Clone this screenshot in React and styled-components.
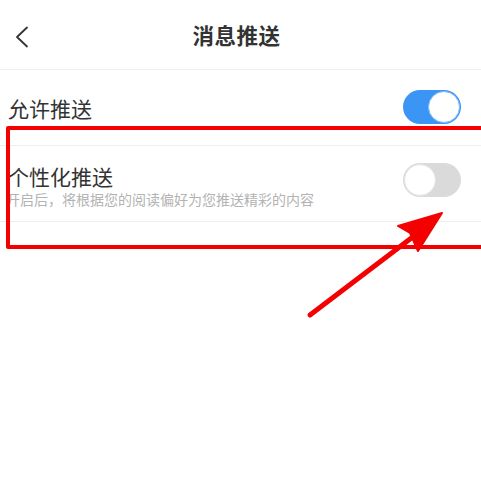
import React, { useState } from 'react'
import styled, { createGlobalStyle } from 'styled-components'

const GlobalStyle = createGlobalStyle`
  html, body {
    margin: 0;
    padding: 0;
    background: #ffffff;
  }
  body {
    font-family: "Noto Sans CJK SC", "Noto Sans", sans-serif;
    color: #333333;
  }
`

const Page = styled.div`
  position: relative;
  width: 481px;
  height: 490px;
  overflow: hidden;
  background: #fff;
`

const Header = styled.header`
  height: 69px;
  display: flex;
  align-items: center;
  justify-content: center;
  position: relative;
  border-bottom: 1px solid #eeeeee;
`

const BackButton = styled.button`
  position: absolute;
  left: 10px;
  top: 22px;
  width: 24px;
  height: 30px;
  padding: 0;
  border: none;
  background: none;
  display: flex;
  align-items: center;
  justify-content: center;
`

const Title = styled.h1`
  margin: 0 8px 1px 0;
  font-size: 21.5px;
  font-weight: 700;
  color: #333;
  letter-spacing: 0.5px;
`

const Row = styled.div`
  height: 75px;
  display: flex;
  align-items: center;
  justify-content: space-between;
  padding: 0 20px 0 8px;
  border-bottom: 1px solid #eeeeee;
`

const TextBlock = styled.div`
  display: flex;
  flex-direction: column;
  justify-content: center;
  margin-top: ${(p) => p.$shift || 0}px;
`

const Label = styled.span`
  font-size: 21px;
  line-height: 28px;
  color: #333;
`

const Hint = styled.span`
  font-size: 14px;
  line-height: 18px;
  color: #b3b3b3;
  margin-left: -2px;
  white-space: nowrap;
`

const Track = styled.button`
  position: relative;
  width: 58px;
  height: 34px;
  padding: 0;
  border: none;
  border-radius: 17px;
  background: ${(p) => (p.$on ? '#3b95f4' : '#dadada')};
  cursor: pointer;
  flex-shrink: 0;
  margin-top: ${(p) => p.$shift || 0}px;
`

const Knob = styled.span`
  position: absolute;
  top: 1px;
  left: ${(p) => (p.$on ? '25px' : '1px')};
  width: 32px;
  height: 32px;
  border-radius: 50%;
  background: #fff;
  box-sizing: border-box;
  border: 1px solid ${(p) => (p.$on ? '#7db8f7' : '#e4e4e4')};
`

const Highlight = styled.div`
  position: absolute;
  left: 6px;
  top: 126px;
  width: 490px;
  height: 123px;
  box-sizing: border-box;
  border: 4px solid #f50000;
  border-radius: 2px;
  pointer-events: none;
`

const Arrow = styled.svg`
  position: absolute;
  left: 0;
  top: 0;
  pointer-events: none;
`

function Toggle({ on, onChange, shift }) {
  return (
    <Track $on={on} $shift={shift} onClick={() => onChange(!on)} aria-pressed={on}>
      <Knob $on={on} />
    </Track>
  )
}

export default function App() {
  const [allow, setAllow] = useState(true)
  const [personal, setPersonal] = useState(false)

  return (
    <Page>
      <GlobalStyle />
      <Header>
        <BackButton aria-label="back">
          <svg width="14" height="22" viewBox="0 0 14 22">
            <polyline
              points="12,1.5 2,11 12,20.5"
              fill="none"
              stroke="#333"
              strokeWidth="1.8"
              strokeLinecap="round"
              strokeLinejoin="round"
            />
          </svg>
        </BackButton>
        <Title>消息推送</Title>
      </Header>

      <Row>
        <TextBlock>
          <Label>允许推送</Label>
        </TextBlock>
        <Toggle on={allow} onChange={setAllow} shift={-1} />
      </Row>

      <Row>
        <TextBlock $shift={2}>
          <Label>个性化推送</Label>
          <Hint>开启后，将根据您的阅读偏好为您推送精彩的内容</Hint>
        </TextBlock>
        <Toggle on={personal} onChange={setPersonal} shift={-8} />
      </Row>

      {/* annotation overlay */}
      <Highlight />
      <Arrow width="481" height="490" viewBox="0 0 481 490">
        <line
          x1="310"
          y1="315"
          x2="414"
          y2="236"
          stroke="#f50000"
          strokeWidth="5"
          strokeLinecap="round"
        />
        <polygon
          points="442,213 398,226 410,233 418,251"
          fill="#f50000"
          stroke="#f50000"
          strokeWidth="2"
          strokeLinejoin="round"
        />
      </Arrow>
    </Page>
  )
}
